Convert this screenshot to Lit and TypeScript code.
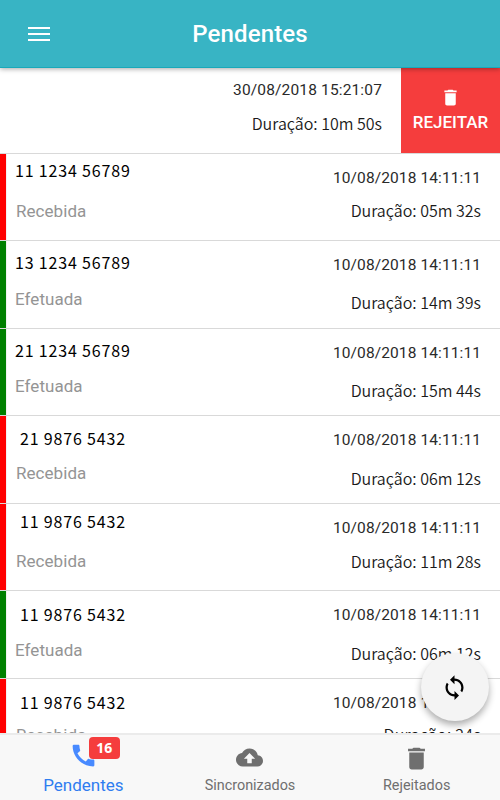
import { LitElement, html, css, svg } from "lit";
import { customElement, property } from "lit/decorators.js";
import { classMap } from "lit/directives/class-map.js";
import { styleMap } from "lit/directives/style-map.js";

interface Call {
  phone: string;
  kind: "Recebida" | "Efetuada";
  date: string;
  duration: string;
  phoneTop: number;
  kindTop: number;
  durationTop: number;
  height: number;
  indent?: boolean;
  loose?: boolean;
}

const DATE = "10/08/2018 14:11:11";

const CALLS: Call[] = [
  { phone: "11 1234 56789", kind: "Recebida", date: DATE, duration: "05m 32s", phoneTop: 4, kindTop: 45, durationTop: 44, height: 87 },
  { phone: "13 1234 56789", kind: "Efetuada", date: DATE, duration: "14m 39s", phoneTop: 9, kindTop: 46, durationTop: 49, height: 88 },
  { phone: "21 1234 56789", kind: "Efetuada", date: DATE, duration: "15m 44s", phoneTop: 9, kindTop: 45, durationTop: 49, height: 87 },
  { phone: "21 9876 5432", kind: "Recebida", date: DATE, duration: "06m 12s", phoneTop: 10, kindTop: 45, durationTop: 50, height: 88, indent: true },
  { phone: "11 9876 5432", kind: "Recebida", date: DATE, duration: "11m 28s", phoneTop: 5, kindTop: 45, durationTop: 45, height: 87, indent: true },
  { phone: "11 9876 5432", kind: "Efetuada", date: DATE, duration: "06m 12s", phoneTop: 11, kindTop: 47, durationTop: 50, height: 88, indent: true },
  { phone: "11 9876 5432", kind: "Recebida", date: DATE, duration: "24s", phoneTop: 11, kindTop: 44, durationTop: 43, height: 88, indent: true, loose: true },
];

const TRASH = svg`<path d="M6 19c0 1.1.9 2 2 2h8c1.100 0 2-.9 2-2V7H6v12zM19 4h-3.500l-1-1h-5l-1 1H5v2h14V4z"/>`;
const PHONE = svg`<path d="M20.010 15.380c-1.230 0-2.420-.2-3.530-.56-.35-.12-.74-.03-1.010.24l-1.570 1.970c-2.830-1.350-5.480-3.900-6.890-6.830l1.950-1.660c.27-.28.35-.67.24-1.020-.37-1.110-.56-2.300-.56-3.530 0-.54-.45-.99-.99-.99H4.190C3.650 3 3 3.240 3 3.990 3 13.280 10.730 21 20.010 21c.71 0 .99-.63.99-1.180v-3.450c0-.54-.45-.99-.99-.99z"/>`;
const CLOUD = svg`<path d="M19.350 10.040C18.670 6.590 15.640 4 12 4 9.110 4 6.600 5.640 5.350 8.040 2.340 8.360 0 10.910 0 14c0 3.310 2.690 6 6 6h13c2.760 0 5-2.240 5-5 0-2.640-2.050-4.780-4.650-4.960zM14 13v4h-4v-4H7l5-5 5 5h-3z"/>`;
const SYNC = svg`<path d="M12 4V1L8 5l4 4V6c3.310 0 6 2.690 6 6 0 1.010-.25 1.970-.7 2.800l1.460 1.460C19.540 15.030 20 13.570 20 12c0-4.420-3.580-8-8-8zm0 14c-3.310 0-6-2.690-6-6 0-1.010.25-1.970.7-2.800L5.240 7.740C4.460 8.970 4 10.430 4 12c0 4.420 3.580 8 8 8v3l4-4-4-4v3z"/>`;

@customElement("call-row")
export class CallRow extends LitElement {
  @property({ attribute: false }) call!: Call;

  static styles = css`
    :host { display: block; flex: none; }
    .row {
      display: flex;
      justify-content: space-between;
      box-sizing: border-box;
      border-top: 1px solid #d9d9d9;
      background: linear-gradient(to right, var(--mark) 6px, #e4e4e4 6px, #fff 7px);
    }
    .in { --mark: #f00; }
    .out { --mark: #008000; }
    .left, .right { display: grid; grid-template-areas: "cell"; align-items: start; align-content: start; }
    .left { padding-left: 15px; justify-items: start; }
    .right { padding-right: 19px; justify-items: end; }
    .left > *, .right > * { grid-area: cell; white-space: pre; line-height: 24px; height: 24px; }
    .phone { font: 400 16px/24px "Noto Sans CJK SC", sans-serif; letter-spacing: 0.83px; color: #000; }
    .indent { padding-left: 5px; }
    .kind { font-size: 17px; letter-spacing: 0.05px; color: #949494; }
    .in .kind { padding-left: 1px; }
    .date { font-size: 15.5px; letter-spacing: 0.1px; color: #2a2a2a; padding-top: 12px; }
    .duration { font: 350 16px/24px "Noto Sans CJK SC", sans-serif; color: #1a1a1a; }
    .loose { letter-spacing: 0.25px; }
  `;

  render() {
    const c = this.call;
    return html`
      <div class=${classMap({ row: true, in: c.kind === "Recebida", out: c.kind === "Efetuada" })}
        style=${styleMap({ height: `${c.height}px` })}>
        <div class="left">
          <span class=${classMap({ phone: true, indent: !!c.indent })} style=${styleMap({ "padding-top": `${c.phoneTop}px` })}>${c.phone}</span>
          <span class="kind" style=${styleMap({ "padding-top": `${c.kindTop}px` })}>${c.kind}</span>
        </div>
        <div class="right">
          <span class="date">${c.date}</span>
          <span class=${classMap({ duration: true, loose: !!c.loose })} style=${styleMap({ "padding-top": `${c.durationTop}px` })}>Duração: ${c.duration}</span>
        </div>
      </div>`;
  }
}

@customElement("app-root")
export class AppRoot extends LitElement {
  static styles = css`
    :host {
      display: flex;
      flex-direction: column;
      position: relative;
      width: 500px;
      height: 800px;
      overflow: hidden;
      background: #fff;
      font-family: Roboto, sans-serif;
    }
    svg { display: block; fill: currentColor; }
    header {
      flex: none;
      box-sizing: border-box;
      height: 68px;
      display: grid;
      grid-template-columns: 66px 1fr 66px;
      align-items: center;
      background: #38b4c4;
      border-bottom: 1px solid #18a9ba;
      box-shadow: 0 1px 5px rgba(0, 0, 0, 0.35);
      color: #fff;
      z-index: 1;
    }
    .menu { display: grid; gap: 4px; width: 22px; margin-left: 28px; }
    .bar { height: 2px; background: #fff; }
    h1 { margin: 0; text-align: center; font-size: 24px; font-weight: 500; line-height: 32px; letter-spacing: 0.15px; padding-top: 1px; }
    main { flex: 1; min-height: 0; overflow: hidden; display: flex; flex-direction: column; }
    .swiped { flex: none; display: flex; height: 85px; }
    .info { flex: 1; display: flex; flex-direction: column; align-items: flex-end; padding: 10px 19px 0 0; line-height: 24px; white-space: nowrap; }
    .date { font-size: 15.5px; letter-spacing: 0.15px; color: #2a2a2a; }
    .duration { margin-top: 9px; font: 350 16px/24px "Noto Sans CJK SC", sans-serif; color: #1a1a1a; }
    .reject { width: 99px; display: flex; flex-direction: column; align-items: center; background: #f53d3d; color: #fff; padding-top: 19px; box-sizing: border-box; font-size: 17px; font-weight: 500; line-height: 24px; gap: 2px; }
    nav {
      flex: none;
      box-sizing: border-box;
      height: 67px;
      display: grid;
      grid-template-columns: repeat(3, 1fr);
      background: #f8f8f8;
      border-top: 2px solid #ebebeb;
      color: #6f6f6f;
    }
    .tab { display: flex; flex-direction: column; align-items: center; padding-top: 9px; font-size: 14.4px; line-height: 20px; }
    .icon { position: relative; height: 26px; display: grid; place-items: center; margin-bottom: 5px; }
    .label { padding-top: 1px; }
    .active { color: #488aff; font-size: 17px; }
    .active .label { color: #2f7df0; padding-top: 0; }
    .active > .icon > svg { margin-top: -4px; }
    .badge {
      position: absolute; left: 20px; top: -7px; width: 31px; height: 22px;
      border-radius: 4px; background: #f53d3d; color: #fff;
      font: 700 14px/22px "Noto Sans", sans-serif; text-align: center;
    }
    .fab {
      position: absolute; right: 11px; bottom: 79px; width: 68px; height: 68px;
      border-radius: 50%; background: #f4f4f4; color: #000;
      display: grid; place-items: center;
      box-shadow: 0 4px 7px rgba(0, 0, 0, 0.32);
    }
    .fab svg { margin-right: 2px; }
  `;

  private icon(shape: unknown, size: number) {
    return html`<svg viewBox="0 0 24 24" width=${size} height=${size}>${shape}</svg>`;
  }

  render() {
    return html`
      <header>
        <div class="menu"><div class="bar"></div><div class="bar"></div><div class="bar"></div></div>
        <h1>Pendentes</h1>
      </header>
      <main>
        <div class="swiped">
          <div class="info">
            <span class="date">30/08/2018 15:21:07</span>
            <span class="duration">Duração: 10m 50s</span>
          </div>
          <div class="reject">${this.icon(TRASH, 21)}<span>REJEITAR</span></div>
        </div>
        ${CALLS.map((c) => html`<call-row .call=${c}></call-row>`)}
      </main>
      <nav>
        <div class="tab active">
          <div class="icon">${this.icon(PHONE, 29)}<span class="badge">16</span></div>
          <span class="label">Pendentes</span>
        </div>
        <div class="tab"><div class="icon">${this.icon(CLOUD, 27)}</div><span class="label">Sincronizados</span></div>
        <div class="tab"><div class="icon">${this.icon(TRASH, 29)}</div><span class="label">Rejeitados</span></div>
      </nav>
      <div class="fab">${this.icon(SYNC, 27)}</div>
    `;
  }
}
